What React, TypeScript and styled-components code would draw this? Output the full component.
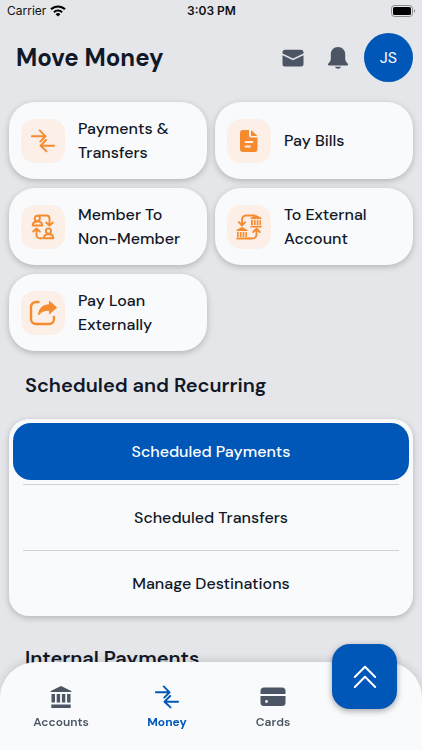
import React from "react";
import styled, { createGlobalStyle } from "styled-components";

const color = {
  page: "#e5e6ea",
  surface: "#f9fafc",
  ink: "#111827",
  muted: "#4b5563",
  brand: "#0057b8",
  accent: "#f58b2e",
  tint: "#fbefe7",
};

const GlobalStyle = createGlobalStyle`
  * { box-sizing: border-box; }
  body {
    margin: 0;
    background: ${color.page};
    color: ${color.ink};
    font-family: "DM Sans", Inter, "Open Sans", sans-serif;
    font-optical-sizing: none;
  }
  button { font: inherit; font-optical-sizing: none; color: inherit; border: 0; padding: 0; cursor: pointer; }
`;

const Screen = styled.div`
  height: 100vh;
  overflow: hidden;
  display: flex;
  flex-direction: column;
`;

const StatusBar = styled.div`
  display: grid;
  grid-template-columns: 1fr auto 1fr;
  align-items: center;
  height: 22px;
  padding: 0 6px 0 7px;
  font: 400 12px/16px Inter, sans-serif;
  color: #111;
`;

const Carrier = styled.span`
  display: flex;
  align-items: center;
  gap: 4px;
`;

const Clock = styled.span`
  font-weight: 600;
`;

const BatterySlot = styled.span`
  display: flex;
  justify-content: flex-end;
`;

const Header = styled.header`
  display: flex;
  align-items: center;
  padding: 11px 9px 0 16px;
`;

const Title = styled.h1`
  flex: 1;
  margin: 0;
  font-size: 24px;
  line-height: 32px;
  font-weight: 700;
`;

const IconButton = styled.button`
  display: flex;
  align-items: center;
  justify-content: center;
  width: 45px;
  height: 44px;
  background: none;
  color: ${color.muted};
`;

const Avatar = styled.button`
  width: 49px;
  height: 49px;
  margin-left: 4px;
  border-radius: 50%;
  background: ${color.brand};
  font-size: 16px;
  && { color: #fff; }
`;

const Content = styled.main`
  flex: 1;
  min-height: 0;
  overflow: hidden;
  padding: 20px 9px 0;
`;

const TileGrid = styled.div`
  display: grid;
  grid-template-columns: 1fr 1fr;
  gap: 9px 8px;
`;

const Tile = styled.button`
  display: flex;
  align-items: center;
  gap: 13px;
  height: 77px;
  && { padding: 0 12px; }
  border-radius: 26px;
  background: ${color.surface};
  box-shadow: 0 2px 6px rgba(0, 0, 0, 0.22);
  text-align: left;
`;

const TileIcon = styled.span`
  display: flex;
  flex: none;
  align-items: center;
  justify-content: center;
  width: 44px;
  height: 44px;
  border-radius: 14px;
  background: ${color.tint};
  color: ${color.accent};
`;

const TileLabel = styled.span`
  font-size: 16px;
  line-height: 24px;
  font-weight: 500;
  white-space: pre-line;
`;

const SectionTitle = styled.h2<{ $top: number }>`
  margin: ${(p) => p.$top}px 16px 20px;
  font-size: 20px;
  line-height: 28px;
  font-weight: 600;
`;

const ListCard = styled.ul`
  margin: 0;
  padding: 4px;
  list-style: none;
  border-radius: 20px;
  background: ${color.surface};
  box-shadow: 0 2px 6px rgba(0, 0, 0, 0.22);
`;

const ListItem = styled.li`
  & + &::before {
    content: "";
    display: block;
    height: 1px;
    margin: 4px 10px;
    background: #cfd1d6;
  }
`;

const ListButton = styled.button<{ $active?: boolean }>`
  display: block;
  width: 100%;
  height: 57px;
  border-radius: 18px;
  font-size: 16px;
  font-weight: 500;
  background: ${(p) => (p.$active ? color.brand : "transparent")};
  && { color: ${(p) => (p.$active ? "#fff" : color.ink)}; }
`;

const BottomBar = styled.nav`
  position: fixed;
  left: 0;
  right: 0;
  bottom: 0;
  display: grid;
  grid-template-columns: repeat(3, 1fr);
  height: 88px;
  padding: 0 96px 0 8px;
  border-radius: 36px 36px 0 0;
  background: ${color.surface};
  box-shadow: 0 -2px 8px rgba(0, 0, 0, 0.12);
`;

const Tab = styled.a<{ $active?: boolean }>`
  display: flex;
  flex-direction: column;
  align-items: center;
  gap: 5px;
  padding-top: 23px;
  color: ${(p) => (p.$active ? color.brand : color.muted)};
  font-size: 12px;
  line-height: 16px;
  font-weight: ${(p) => (p.$active ? 700 : 600)};
  text-decoration: none;
`;

const TopButton = styled.button`
  position: absolute;
  right: 25px;
  top: -18px;
  display: flex;
  align-items: center;
  justify-content: center;
  width: 65px;
  height: 65px;
  border-radius: 18px;
  background: ${color.brand};
  box-shadow: 0 2px 6px rgba(0, 0, 0, 0.35);
  && { color: #fff; }
`;

const line = {
  fill: "none",
  stroke: "currentColor",
  strokeLinecap: "round" as const,
  strokeLinejoin: "round" as const,
};

const WifiIcon = () => (
  <svg width="16" height="12" viewBox="0 0 16 12" aria-hidden="true">
    <g fill="none" stroke="#000" strokeWidth="2">
      <path d="M1 4.3a10 10 0 0 1 14 0" />
      <path d="M3.9 7.2a5.9 5.9 0 0 1 8.2 0" />
    </g>
    <path d="M8 11.6 5.6 9.2a3.4 3.4 0 0 1 4.8 0Z" />
  </svg>
);

const BatteryIcon = () => (
  <svg width="25" height="12" viewBox="0 0 25 12" aria-hidden="true">
    <rect x=".5" y=".5" width="21" height="11" rx="3" fill="none" stroke="#8b8c8f" />
    <rect x="2" y="2" width="18" height="8" rx="1.6" />
    <path d="M23 4.2v3.6c1.6-.6 1.6-3 0-3.6Z" fill="#8b8c8f" />
  </svg>
);

const MailIcon = () => (
  <svg width="22" height="18" viewBox="0 0 22 18" fill="currentColor" aria-hidden="true">
    <path d="M.5 4.500V3A2.500 2.500 0 0 1 3 .8h16A2.500 2.500 0 0 1 21.500 3v1.500L11 9.500Z" />
    <path d="M.5 6.300 11 11.300l10.500-5V15a2.500 2.500 0 0 1-2.500 2.500H3A2.500 2.500 0 0 1 .5 15Z" />
  </svg>
);

const BellIcon = () => (
  <svg width="22" height="24" viewBox="0 0 22 24" fill="currentColor" aria-hidden="true">
    <path d="M11 1C6.600 1 3.800 4.300 3.800 8.300v4.500c0 1.700-.9 3.200-2.400 4.600-.9.900-.5 2 .6 2h18c1.100 0 1.500-1.100.6-2-1.500-1.400-2.400-2.900-2.400-4.600V8.300C18.200 4.300 15.400 1 11 1Z" />
    <path d="M8 20.700h6c-.6 2.600-5.400 2.600-6 0Z" />
  </svg>
);

const ArrowsIcon = () => (
  <svg width="24" height="24" viewBox="0 0 24 24" {...line} strokeWidth="1.900" aria-hidden="true">
    <path d="M.9 7.300h13.300M8.700 1.400l5.900 5.900-5.400 5.300" />
    <path d="M23.100 16.700H9.900M15.200 11l-5.700 5.700 6 5.700" />
  </svg>
);

const DocumentIcon = () => (
  <svg width="18" height="24" viewBox="0 0 18 24" aria-hidden="true">
    <path d="M3 1h6v5.500A2 2 0 0 0 11 8.500h6.500V20a3 3 0 0 1-3 3H3a3 3 0 0 1-3-3V4a3 3 0 0 1 3-3Z" fill="currentColor" />
    <path d="M11 1 17.500 7H12a1 1 0 0 1-1-1Z" fill="currentColor" />
    <path d="M5.500 13h7M5.500 17.500h4.500" stroke={color.tint} strokeWidth="1.800" strokeLinecap="round" />
  </svg>
);

const MembersIcon = () => (
  <svg width="24" height="26" viewBox="0 0 24 26" {...line} strokeWidth="1.900" aria-hidden="true">
    <circle cx="6.300" cy="4.300" r="2.600" />
    <path d="M1.700 11.500h9.600c0-2.500-2-4-4.800-4s-4.800 1.500-4.800 4Z" />
    <path d="M8 1.500h7.500a3 3 0 0 1 3 3v6.500M15.200 8.500l3.300 3 3.300-3" />
    <circle cx="17.500" cy="17" r="2.600" />
    <path d="M12.700 24.300h9.600c0-2.500-2-4-4.800-4s-4.800 1.500-4.800 4Z" />
    <path d="M11 24.300H8.500a3 3 0 0 1-3-3v-6M2.200 17.500l3.300-3 3.300 3" />
  </svg>
);

const BanksIcon = () => (
  <svg width="26" height="26" viewBox="0 0 26 26" aria-hidden="true">
    <g {...line} strokeWidth="1.900">
      <path d="M18.500 1.500H10a4 4 0 0 0-4 4V11M2.800 8.200 6 11.500l3.200-3.300" />
      <path d="M13 24.500h3.500a4 4 0 0 0 4-4V15M17.300 18l3.200-3.300 3.200 3.300" />
    </g>
    <g fill="currentColor">
      <path d="M14.500 5V4l5.500-3 5.500 3v1ZM15 6h1.800v5H15Zm2.900 0h1.700v5h-1.700Zm2.800 0h1.700v5h-1.700Zm2.800 0H25v5h-1.500ZM14.500 11.800h11v1.700h-11Z" />
      <path d="M.5 17v-1L6 13l5.500 3v1ZM1 18h1.600v5H1Zm2.800 0h1.700v5H3.800Zm2.800 0h1.700v5H6.600Zm2.800 0H11v5H9.400ZM.5 23.600h13v1.900H.5Z" />
    </g>
  </svg>
);

const ShareIcon = () => (
  <svg width="28" height="26" viewBox="0 0 28 26" aria-hidden="true">
    <path d="M9.500 2H7a5 5 0 0 0-5 5v12a5 5 0 0 0 5 5h13a5 5 0 0 0 5-5v-2" {...line} strokeWidth="2.400" />
    <path d="M20.500 1.300v3.500C13.500 5 10 8.500 9.500 15c2.500-3.500 6-5 11-4.800v3.600l7-6.200Z" fill="currentColor" stroke="currentColor" strokeLinejoin="round" />
  </svg>
);

const BankIcon = () => (
  <svg width="22" height="24" viewBox="0 0 22 24" fill="currentColor" aria-hidden="true">
    <path d="M.7 7V6L11 1l10.300 5v1ZM1.500 9h3.500v8.500H1.500Zm5.200 0h3.400v8.500H6.700Zm5.200 0h3.400v8.500h-3.400Zm5.200 0h3.400v8.500h-3.400ZM1.300 19.500h19.400v3.500H1.300Z" />
  </svg>
);

const CardIcon = () => (
  <svg width="26" height="24" viewBox="0 0 26 24" aria-hidden="true">
    <path d="M.5 9V6a3.500 3.500 0 0 1 3.500-3.500h18A3.500 3.500 0 0 1 25.500 6v3ZM.5 11h25v6.500A3.500 3.500 0 0 1 22 21H4a3.500 3.500 0 0 1-3.500-3.500Z" fill="currentColor" />
    <circle cx="6.500" cy="16.500" r="1.400" fill={color.surface} />
  </svg>
);

const ChevronsIcon = () => (
  <svg width="24" height="24" viewBox="0 0 24 24" {...line} strokeWidth="2" aria-hidden="true">
    <path d="M1.800 12 12 1.800 22.200 12M1.800 22 12 11.800 22.200 22" />
  </svg>
);

const tiles = [
  { label: "Payments &\nTransfers", Icon: ArrowsIcon },
  { label: "Pay Bills", Icon: DocumentIcon },
  { label: "Member To\nNon-Member", Icon: MembersIcon },
  { label: "To External\nAccount", Icon: BanksIcon },
  { label: "Pay Loan\nExternally", Icon: ShareIcon },
];

const scheduled = ["Scheduled Payments", "Scheduled Transfers", "Manage Destinations"];

export default function App() {
  return (
    <Screen>
      <GlobalStyle />
      <StatusBar>
        <Carrier>
          Carrier
          <WifiIcon />
        </Carrier>
        <Clock>3:03 PM</Clock>
        <BatterySlot>
          <BatteryIcon />
        </BatterySlot>
      </StatusBar>
      <Header>
        <Title>Move Money</Title>
        <IconButton aria-label="Messages">
          <MailIcon />
        </IconButton>
        <IconButton aria-label="Notifications">
          <BellIcon />
        </IconButton>
        <Avatar>JS</Avatar>
      </Header>
      <Content>
        <TileGrid>
          {tiles.map(({ label, Icon }) => (
            <Tile key={label}>
              <TileIcon>
                <Icon />
              </TileIcon>
              <TileLabel>{label}</TileLabel>
            </Tile>
          ))}
        </TileGrid>
        <SectionTitle $top={20}>Scheduled and Recurring</SectionTitle>
        <ListCard>
          {scheduled.map((label, i) => (
            <ListItem key={label}>
              <ListButton $active={i === 0}>{label}</ListButton>
            </ListItem>
          ))}
        </ListCard>
        <SectionTitle $top={28}>Internal Payments</SectionTitle>
      </Content>
      <BottomBar>
        <Tab href="#accounts">
          <BankIcon />
          Accounts
        </Tab>
        <Tab href="#money" $active aria-current="page">
          <ArrowsIcon />
          Money
        </Tab>
        <Tab href="#cards">
          <CardIcon />
          Cards
        </Tab>
        <TopButton aria-label="Back to top">
          <ChevronsIcon />
        </TopButton>
      </BottomBar>
    </Screen>
  );
}
